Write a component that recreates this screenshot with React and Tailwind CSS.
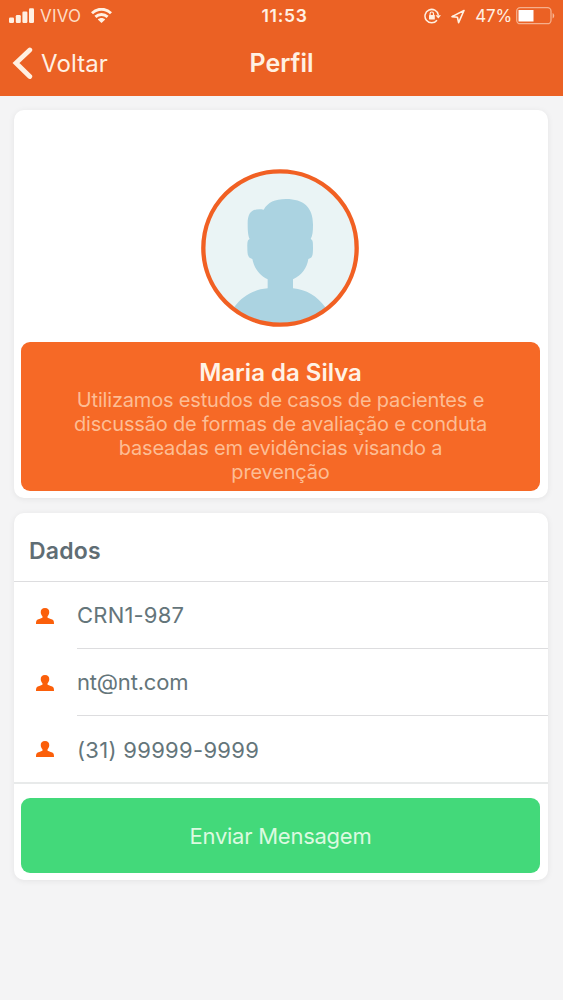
import React from "react";

const contactRows = [
  { id: 1, text: "CRN1-987", className: "text-[22px] tracking-[0.2px]" },
  { id: 2, text: "nt@nt.com", className: "pt-px text-[22px] tracking-[-0.2px]" },
  { id: 3, text: "(31) 99999-9999", className: "pt-[3px] text-[22px] tracking-[0.3px]" },
];

const bioLines = [
  "Utilizamos estudos de casos de pacientes e",
  "discussão de formas de avaliação e conduta",
  "baseadas em evidências visando a",
  "prevenção",
];

function SignalIcon() {
  return (
    <svg width="26" height="16" viewBox="0 0 26 16" fill="currentColor">
      <rect x="0" y="9.4" width="5" height="5.6" rx="1.2" />
      <rect x="6.8" y="7" width="5" height="8" rx="1.2" />
      <rect x="13.4" y="3.6" width="5" height="11.4" rx="1.2" />
      <rect x="20" y="0.2" width="5" height="14.8" rx="1.2" />
    </svg>
  );
}

function WifiIcon() {
  return (
    <svg width="21" height="16" viewBox="0 0 21 16" fill="none" stroke="currentColor" strokeWidth="2.9">
      <path d="M1 5.2C6.3-.1 14.7-.1 20 5.2" />
      <path d="M4.4 8.9C7.9 5.6 13.1 5.6 16.6 8.9" />
      <path d="M6.8 11.6C8.8 9.6 12.2 9.6 14.2 11.6L10.5 15Z" fill="currentColor" stroke="none" />
    </svg>
  );
}

function RotationLockIcon() {
  return (
    <svg width="18" height="16" viewBox="0 0 18 16" fill="none" stroke="currentColor" strokeWidth="1.5">
      <path d="M13 12.2A6.7 6.7 0 1 1 14.3 7" />
      <path d="M11.5 7.2H17L14.3 10.5Z" fill="currentColor" stroke="none" />
      <rect x="5" y="7" width="5.8" height="4.6" rx=".5" fill="currentColor" stroke="none" />
      <path d="M6.1 7.3V5.7a1.7 1.7 0 0 1 3.4 0v1.6" strokeWidth="1.2" />
    </svg>
  );
}

function LocationIcon() {
  return (
    <svg width="15" height="15" viewBox="0 0 15 15" fill="none" stroke="currentColor" strokeWidth="1.6">
      <path d="M13 1.5L1 7.6L6.4 8.2L7.6 13.6Z" strokeLinejoin="round" />
    </svg>
  );
}

function BatteryIcon() {
  return (
    <svg width="40" height="18" viewBox="0 0 40 18" fill="none">
      <rect x=".7" y=".7" width="34.3" height="16" rx="3.5" stroke="currentColor" strokeOpacity=".55" strokeWidth="1.3" />
      <rect x="2.5" y="3" width="15" height="11.5" fill="white" />
      <path d="M36.6 6C38.8 7 38.8 10.5 36.6 11.5Z" fill="currentColor" fillOpacity=".6" />
    </svg>
  );
}

function PersonIcon() {
  return (
    <svg width="18" height="18" viewBox="0 0 19 18" fill="#fb5f0a" className="shrink-0">
      <path d="M9.5 .5C6.4 .5 4.9 2.2 5 5C5.1 6.8 5.8 8.2 6.8 9.3V10.9C5.3 11.9 1.6 12.2 .6 13.8C.1 14.6 0 16 0 17.5H19C19 16 18.9 14.6 18.4 13.8C17.4 12.2 13.7 11.9 12.2 10.9V9.3C13.2 8.2 13.9 6.8 14 5C14.1 2.2 12.6 .5 9.5 .5Z" />
    </svg>
  );
}

function Avatar() {
  return (
    <svg width="158" height="158" viewBox="34 28 474 474" className="mr-0.5">
      <defs>
        <clipPath id="avatar-circle">
          <circle cx="271" cy="265" r="226" />
        </clipPath>
      </defs>
      <circle cx="271" cy="265" r="230" fill="#eaf4f5" />
      <g clipPath="url(#avatar-circle)" fill="#abd3e1">
        <path d="M222 150C235 128 255 118 289 118C342 118 370 143 370 195C370 214 369 227 363 238C370 241 370 248 370 264C370 288 368 295 356 298C352 324 338 345 310 359V386C350 390 382 409 407 443V510H133V443C158 409 190 390 234 386V359C207 345 193 324 188 298C176 295 173 288 173 264C173 248 173 241 180 238C175 227 174 214 174 192C174 158 187 145 222 150Z" />
      </g>
      <circle cx="271" cy="265" r="230" fill="none" stroke="#f16023" strokeWidth="13" />
    </svg>
  );
}

function Header() {
  return (
    <header className="h-24 bg-[#eb6124] text-[#fff0e2]">
      <div className="grid h-8 grid-cols-[1fr_auto_1fr] items-center pl-[9px] pr-[7px]">
        <div className="flex items-center">
          <SignalIcon />
          <span className="ml-[5px] w-[43px] whitespace-nowrap pt-px text-[17px] tracking-[0.2px] text-[#fddcc4]">
            VIVO
          </span>
          <span className="ml-2">
            <WifiIcon />
          </span>
        </div>
        <span className="pl-1 text-[17.5px] font-semibold tracking-[0.7px]">11:53</span>
        <div className="flex items-center justify-end">
          <RotationLockIcon />
          <span className="ml-[9px]">
            <LocationIcon />
          </span>
          <span className="ml-[9px] mr-1 pt-px text-[17px] tracking-[-0.2px]">47%</span>
          <BatteryIcon />
        </div>
      </div>
      <div className="grid h-16 grid-cols-[1fr_auto_1fr] items-center pr-3 pl-3">
        <button className="flex items-center gap-2">
          <svg width="21" height="34" viewBox="0 0 21 34" fill="none" stroke="currentColor" strokeWidth="4.8">
            <path d="M17.8 3L4 16L17.8 29.5" strokeLinecap="round" />
          </svg>
          <span className="text-2xl tracking-[0.1px]">Voltar</span>
        </button>
        <h1 className="text-[25px] font-semibold">Perfil</h1>
      </div>
    </header>
  );
}

function ProfileCard() {
  return (
    <section className="flex h-[388px] flex-col items-center rounded-[10px] bg-white pr-2 pl-[7px] pt-[59px] shadow-[0_1px_6px_rgba(0,0,0,0.07)]">
      <Avatar />
      <div className="mt-[15px] h-[149px] w-full rounded-[9px] bg-[#f66926] pt-4 text-center">
        <h2 className="text-2xl leading-[30px] font-semibold text-[#fff3e6]">Maria da Silva</h2>
        <p className="text-[20px] leading-6 tracking-[-0.18px] text-[#fdbd94]">
          {bioLines.map((line) => (
            <span key={line} className="block whitespace-nowrap">
              {line}
            </span>
          ))}
        </p>
      </div>
    </section>
  );
}

function DataCard() {
  return (
    <section className="mt-[15px] h-[367px] rounded-[10px] bg-white shadow-[0_1px_6px_rgba(0,0,0,0.07)]">
      <h3 className="h-[69px] border-b border-[#dddddf] pt-5 pl-[15px] text-[23px] leading-9 font-semibold tracking-[0.2px] text-[#5f6d74]">
        Dados
      </h3>
      <ul className="border-b-2 border-[#e8eaea]">
        {contactRows.map((row, index) => (
          <li key={row.id} className="flex h-[67px] items-center pl-[22px] last:h-[66px]">
            <PersonIcon />
            <div
              className={`ml-[23px] flex h-full flex-1 items-center text-[#64757a] ${
                index < contactRows.length - 1 ? "border-b border-[#dddddf]" : ""
              }`}
            >
              <span className={row.className}>{row.text}</span>
            </div>
          </li>
        ))}
      </ul>
      {/* Send message */}
      <div className="pt-3.5 pr-2 pl-[7px]">
        <button className="h-[75px] w-full rounded-[9px] bg-[#43d97a] pt-0.5 text-[22px] tracking-[-0.25px] text-[#dcfae0]">
          Enviar Mensagem
        </button>
      </div>
    </section>
  );
}

function App() {
  return (
    <div className="min-h-screen bg-[#f4f4f5] font-['Inter',sans-serif]">
      <Header />
      <main className="pt-3.5 pr-[15px] pl-3.5">
        <ProfileCard />
        <DataCard />
      </main>
    </div>
  );
}

export default App;
